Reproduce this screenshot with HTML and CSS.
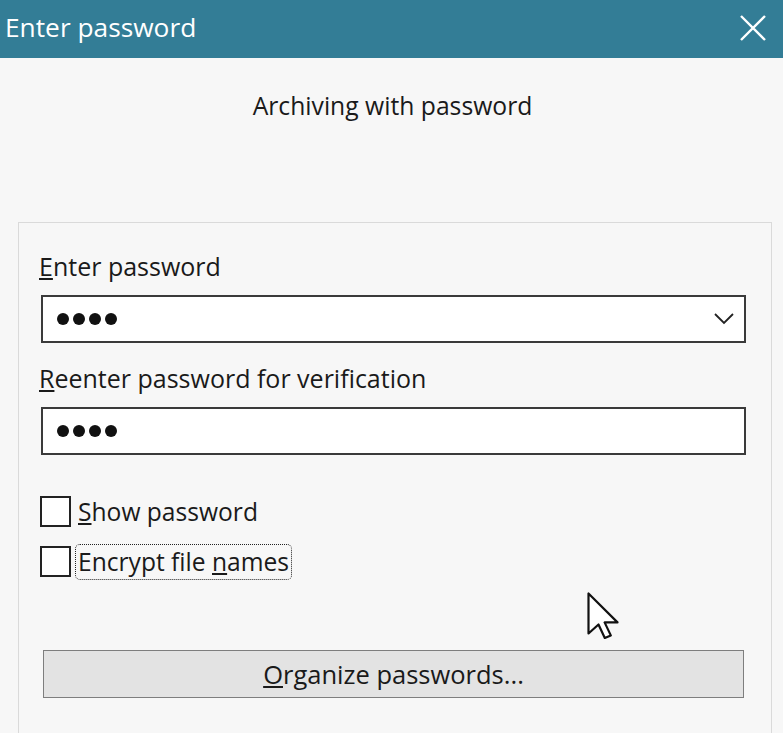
FILE: index.html
```html
<!DOCTYPE html>
<html>
<head>
<meta charset="utf-8">
<link rel="stylesheet" href="styles.css">
</head>
<body>
<div class="window">
  <div class="titlebar">
    <span class="title">Enter password</span>
    <svg class="close" width="26" height="26" viewBox="0 0 26 26"><path d="M1 1 L25 25 M25 1 L1 25" stroke="#fff" stroke-width="2.4" fill="none"/></svg>
  </div>
  <div class="subtitle">Archiving with password</div>
  <div class="group">
    <div class="label"><u>E</u>nter password</div>
    <div class="field combo">
      <span class="dots"><i></i><i></i><i></i><i></i></span>
      <svg class="chev" width="20" height="12" viewBox="0 0 20 12"><path d="M1 1 L10 10 L19 1" stroke="#222" stroke-width="1.8" fill="none"/></svg>
    </div>
    <div class="label second"><u>R</u>eenter password for verification</div>
    <div class="field">
      <span class="dots"><i></i><i></i><i></i><i></i></span>
    </div>
    <div class="checks">
      <div class="check"><span class="box"></span><span class="ctext"><u>S</u>how password</span></div>
      <div class="check"><span class="box"></span><span class="ctext focus">Encrypt file <u>n</u>ames</span></div>
    </div>
    <div class="cursor-row">
      <svg class="cursor" width="32" height="47" viewBox="0 0 32 47"><path d="M1.5 1.5 L1.5 41.5 L11.5 32.5 L17.8 46 L23.8 43.4 L17.6 30.4 L30.5 30.4 Z" fill="#fff" stroke="#111" stroke-width="2.2" stroke-linejoin="round"/></svg>
    </div>
    <div class="button"><u>O</u>rganize passwords...</div>
  </div>
</div>
</body>
</html>
```
FILE: styles.css
```css
html, body {
  margin: 0;
  padding: 0;
  background: #f7f7f7;
}
.window {
  width: 783px;
  height: 733px;
  overflow: hidden;
  font-family: "Open Sans", "Noto Sans", sans-serif;
  color: #1a1a1a;
  background: #f7f7f7;
}
.titlebar {
  height: 58px;
  background: #337d96;
  display: flex;
  align-items: center;
  justify-content: space-between;
  padding: 0 17px 0 5px;
}
.title {
  color: #fff;
  font-size: 26.3px;
  line-height: 30px;
  margin-top: -4px;
}
.close {
  display: block;
  margin-top: -2px;
}
.subtitle {
  text-align: center;
  font-size: 24.7px;
  line-height: 32px;
  margin-top: 32px;
  padding-left: 2px;
}
.group {
  margin: 100px 11px 0 18px;
  border: 1px solid #dadada;
  border-bottom: none;
  padding: 27px 25px 40px 22px;
  height: 600px;
}
.label {
  font-size: 25px;
  line-height: 32px;
  margin-left: -2px;
}
.label.second {
  margin-top: 19px;
}
.field {
  box-sizing: border-box;
  height: 48px;
  border: 2px solid #3a3a3a;
  background: #fff;
  margin-top: 13px;
  display: flex;
  align-items: center;
  justify-content: space-between;
  padding: 0 10px 0 14px;
}
.dots {
  display: flex;
  gap: 4px;
}
.dots i {
  display: block;
  width: 12px;
  height: 12px;
  border-radius: 50%;
  background: #111;
}
.chev {
  display: block;
}
.checks {
  margin-top: 41px;
  display: flex;
  flex-direction: column;
  gap: 19px;
}
.check {
  display: flex;
  align-items: center;
  gap: 6px;
  height: 31px;
  margin-left: -1px;
}
.box {
  width: 27px;
  height: 27px;
  border: 2px solid #222;
  background: #fff;
  flex: none;
}
.ctext {
  font-size: 24.6px;
  line-height: 32px;
  padding: 0 1px;
}
.ctext.focus {
  outline: 1.5px dotted #222;
  outline-offset: 1px;
  border-radius: 3px;
}
.cursor-row {
  box-sizing: border-box;
  height: 73px;
  padding-top: 15px;
  padding-left: 546px;
}
.cursor {
  display: block;
}
.button {
  box-sizing: border-box;
  height: 48px;
  margin-left: 2px;
  margin-right: 2px;
  border: 1px solid #7e7e7e;
  background: #e3e3e3;
  display: flex;
  align-items: center;
  justify-content: center;
  font-size: 25.5px;
  line-height: 32px;
}
```
